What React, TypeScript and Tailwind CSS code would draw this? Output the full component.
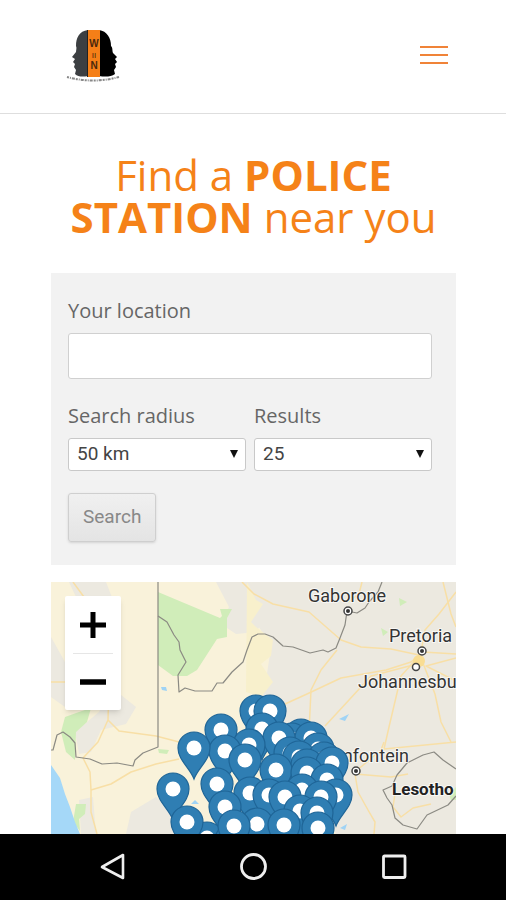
import React from 'react';

// Pin positions on the map, back to front
const pins = [
  [205, 129], [219, 129], [170, 148], [250, 153], [241, 157], [260, 156], [211, 147],
  [228, 156], [198, 163], [267, 167], [174, 169], [143, 166], [239, 171], [248, 175],
  [194, 178], [273, 176], [256, 183], [281, 181], [225, 188], [256, 191],
  [276, 198], [166, 202], [122, 207], [251, 208], [199, 211], [285, 213], [218, 213],
  [270, 215], [234, 215], [174, 225], [249, 229], [266, 231], [156, 256], [180, 258],
  [136, 240], [206, 242], [183, 244], [233, 243], [267, 246],
];

const roads = [
  'M22 0 L33 15 L45 30 L55 50 L58 100 L57 138 L47 160 L32 176 L39 190 L40 208 L40 230 L46 252',
  'M0 100 H22',
  'M57 138 L68 149 L105 154 L128 160 L145 172',
  'M40 208 L60 202 L80 190 L105 182 L128 177',
  'M191 0 L203 12 L222 22 L258 30 L274 44 L290 58 L310 65 L340 67 L368 73',
  'M234 122 L256 112 L290 96 L335 88 L360 80 L372 70 L405 72',
  'M286 68 L270 88 L260 108 L258 150',
  'M311 0 L308 12 L297 20',
  'M392 0 L400 32 L405 45',
  'M405 10 L388 32 L374 48 L370 70',
  'M370 72 L350 94 L338 145 L333 167 L405 160',
  'M366 82 L320 94 L298 118 L274 144',
  'M370 76 L384 112 L390 140 L400 160',
  'M405 76 L375 84 L405 99',
  'M304 192 L340 195 L357 192',
  'M304 192 L307 210 L317 228 L324 240 L323 252',
  'M304 190 L330 168 L333 160',
  'M345 205 L342 225 L350 235 L362 226 L380 222',
];

function Logo() {
  return (
    <svg viewBox="0 -4 54 58" className="h-[58px] w-[54px]" aria-label="WIN">
      <path
        d="M22 0 C13 1 10 8 10 16 C11 18 10 20 10 22 L6 27 L9 29 L7 32 L9 34 L8 37 L10 40 L9 44 C12 47 17 47 22 46 Z"
        fill="#3c3f42"
      />
      <path
        d="M33 0 C41 1 45 8 45 16 C47 18 46 20 47 23 L51 27 L49 29 L51 32 L49 34 L50 37 L48 40 L49 44 C45 47 39 47 33 46 Z"
        fill="#000"
      />
      <rect x="22" y="0" width="12" height="47" fill="#f57f17" />
      <path d="M21.5 0 V47" stroke="#222" strokeWidth="1" />
      <g
        fill="#4a280c"
        fontFamily="Liberation Sans, sans-serif"
        fontSize="10"
        fontWeight="700"
        textAnchor="middle"
      >
        <text x="28" y="17">W</text>
        <text x="28" y="28" fontSize="8" fontWeight="400">II</text>
        <text x="28" y="39">N</text>
      </g>
      <path
        d="M1 47 Q27 54 53 47"
        fill="none"
        stroke="#888"
        strokeWidth="2"
        strokeDasharray="2 1 1 1 3 1"
      />
    </svg>
  );
}

function City({ x, y, capital = false }: { x: number; y: number; capital?: boolean }) {
  return (
    <g>
      <circle cx={x} cy={y} r={capital ? 4 : 3.5} fill="#fff" stroke="#444" strokeWidth="1.5" />
      {capital && <circle cx={x} cy={y} r="2" fill="#333" />}
    </g>
  );
}

function StationMap() {
  return (
    <svg
      viewBox="0 0 405 252"
      preserveAspectRatio="xMidYMin slice"
      className="absolute inset-0 h-full w-full"
      aria-label="Map of police stations"
    >
      <rect width="405" height="252" fill="#f9f2da" />
      {/* terrain */}
      <g fill="#ece9e0">
        <path d="M18 0 L55 0 L62 18 L40 30 L25 15 Z" />
        <path d="M165 0 L200 0 L215 35 L205 50 L185 52 L170 42 L178 25 Z" />
        <path d="M200 0 H405 V252 H285 L240 150 L215 130 L205 118 L214 105 L220 65 L205 40 Z" />
        <path d="M0 55 L14 80 L14 125 L0 115 Z" />
        <path d="M60 105 L85 125 L75 142 L50 148 L40 170 L28 172 L24 150 L48 130 Z" />
        <path d="M28 218 L42 215 L45 252 L30 252 Z" />
        <path d="M80 230 L105 215 L128 235 L135 252 H75 Z" />
      </g>
      <path d="M196 0 L205 18 L212 22 L200 40 L205 45 L222 58 L220 74 L210 82 L222 100 L210 115 L195 110 Z" fill="#f8f0cc" />
      {/* parks */}
      <g fill="#d0edb9">
        <path d="M107 10 L169 36 L171 34 L169 27 H181 L176 36 V55 L166 57 L146 88 L136 94 H122 L107 83 Z" />
        <path d="M28 130 L40 126 L36 140 L25 150 L24 178 L15 170 L10 150 L14 135 Z" />
        <path d="M25 222 L35 222 L34 232 L28 237 L29 249 L22 240 Z" />
        <path d="M107 167 L118 168 L116 172 L108 171 Z" />
        <path d="M348 16 L356 20 L349 24 Z M330 46 L337 50 L332 54 Z" />
        <path d="M398 212 L405 205 V218 L400 218 Z" />
      </g>
      <path d="M0 183 L9 196 L14 212 L19 225 L24 240 L29 252 H0 Z" fill="#a5d8f8" />
      <path
        d="M110 105 L115 105 L116 109 L111 108 Z M140 222 L144 218 L148 222 Z M288 137 L298 132 L294 139 Z M289 246 L296 242 L294 248 Z"
        fill="#9fd3f5"
      />
      <g fill="none" stroke="#f8dfa6" strokeWidth="1.5" strokeLinejoin="round">
        {roads.map((d) => (
          <path key={d} d={d} />
        ))}
      </g>
      <circle cx="368" cy="79" r="6" fill="#f9dd92" />
      {/* borders */}
      <g fill="none" stroke="#8b8a83" strokeWidth="1.2" strokeLinejoin="round">
        <path d="M107 0 V165 L92 171 L84 178 L82 184 L66 181 L51 182 L39 177 L25 175 L24 161 L19 155 L12 150 L6 153 L2 168 L0 168" />
        <path d="M107 34 L116 40 L123 53 L128 60 L129 68 L135 80 L127 93 L128 110 L134 106 L144 109 L161 109 L166 101 H172 L181 90 L192 80 L196 68 L201 55 L207 52 H214 L222 55 L232 64 L242 65 L259 71 L272 68 L277 70 L285 66 L289 56 L294 43 L296 29 L306 31 L314 26 L318 20 L327 10 L331 0" />
        <path d="M405 214 L397 223 L376 233 L371 240 L366 247 L352 243 L344 236 L341 223 L336 216 L332 208 L341 204 L346 193 L356 181 L372 173 L383 170 L392 178 L405 187" />
      </g>
      <City x={297} y={29} capital />
      <City x={371} y={69} capital />
      <City x={365} y={85} />
      <City x={305} y={189} capital />
      <g
        fill="#333"
        stroke="#fff"
        strokeWidth="2"
        strokeOpacity="0.7"
        paintOrder="stroke"
        fontFamily="Roboto, sans-serif"
        fontSize="18"
      >
        <text x="257" y="20">Gaborone</text>
        <text x="338" y="60">Pretoria</text>
        <text x="307" y="106">Johannesburg</text>
        <text x="358" y="180" textAnchor="end">Bloemfontein</text>
        <text x="341" y="213" fontSize="17" fontWeight="700" fill="#222">Lesotho</text>
      </g>
      {pins.map(([x, y]) => (
        <g key={`${x}-${y}`} transform={`translate(${x} ${y})`}>
          <path
            d="M0 31 C-4 20 -16 12 -16 0 A16 16 0 0 1 16 0 C16 12 4 20 0 31 Z"
            fill="#2f7eb3"
            stroke="#1f6597"
            strokeWidth="1.2"
          />
          <circle r="7.5" fill="#fff" />
        </g>
      ))}
    </svg>
  );
}

interface SelectFieldProps {
  id: string;
  label: string;
  options: string[];
}

function SelectField({ id, label, options }: SelectFieldProps) {
  return (
    <div className="flex-1">
      <label htmlFor={id} className="block text-[20px] leading-7">
        {label}
      </label>
      <div className="relative mt-2">
        <select
          id={id}
          className="block h-[33px] w-full appearance-none rounded-[3px] border border-[#c9c9c9] bg-white px-2 font-[Roboto,sans-serif] text-[19px] text-[#444]"
        >
          {options.map((option) => (
            <option key={option}>{option}</option>
          ))}
        </select>
        <svg viewBox="0 0 8 8" className="pointer-events-none absolute top-3 right-2 h-2 w-2">
          <path d="M0 0 H8 L4 8 Z" fill="#111" />
        </svg>
      </div>
    </div>
  );
}

export default function App() {
  return (
    <div className="flex min-h-screen flex-col bg-white font-['Open_Sans',sans-serif] text-[#666]">
      <header className="flex h-[114px] items-center justify-between border-b border-[#dedede] pr-[58px] pb-[3px] pl-[66px]">
        <Logo />
        <button type="button" aria-label="Menu" className="flex w-7 flex-col gap-[6px]">
          <span className="h-[2px] w-full bg-[#f08338]" />
          <span className="h-[2px] w-full bg-[#f08338]" />
          <span className="h-[2px] w-full bg-[#f08338]" />
        </button>
      </header>

      <main className="flex flex-1 flex-col pr-[50px] pl-[51px]">
        <h1 className="mt-10 text-center text-[42px] leading-[42px] font-normal text-[#f58218]">
          Find a <strong className="font-bold">POLICE STATION</strong> near you
        </h1>

        <form className="mt-[35px] bg-[#f2f2f2] pt-6 pr-6 pb-[23px] pl-[17px]" onSubmit={(e) => e.preventDefault()}>
          <label htmlFor="location" className="block text-[20px] leading-7">
            Your location
          </label>
          <input
            id="location"
            type="text"
            className="mt-2 block h-[46px] w-full rounded-[3px] border border-[#d0d0d0] bg-white px-3 text-[19px]"
          />
          <div className="mt-[23px] flex gap-2">
            <SelectField id="radius" label="Search radius" options={['50 km', '100 km', '200 km']} />
            <SelectField id="results" label="Results" options={['25', '50', '75']} />
          </div>
          <button
            type="submit"
            className="mt-[22px] block h-[49px] rounded-[3px] border border-[#cfcfcf] bg-linear-to-b from-[#f0f0f0] to-[#e4e4e4] px-[14px] font-[Roboto,sans-serif] text-[19px] text-[#888] shadow-sm"
          >
            Search
          </button>
        </form>

        <section className="relative mt-[17px] min-h-[252px] flex-1 overflow-hidden">
          <StationMap />
          <div className="absolute top-[14px] left-[14px] flex w-14 flex-col rounded-[2px] bg-white shadow-md">
            <button type="button" aria-label="Zoom in" className="flex h-[57px] items-center justify-center">
              <svg viewBox="0 0 26 26" className="h-[26px] w-[26px]">
                <path d="M0 13 H26 M13 0 V26" stroke="#000" strokeWidth="5" />
              </svg>
            </button>
            <span className="mx-2 h-px bg-[#e6e6e6]" />
            <button type="button" aria-label="Zoom out" className="flex h-14 items-center justify-center">
              <svg viewBox="0 0 26 26" className="h-[26px] w-[26px]">
                <path d="M0 13 H26" stroke="#000" strokeWidth="5.5" />
              </svg>
            </button>
          </div>
        </section>
      </main>

      <nav className="flex h-[66px] items-center justify-around bg-black px-[42px]">
        <button type="button" aria-label="Back">
          <svg viewBox="0 0 28 28" className="h-7 w-7" fill="none" stroke="#eee" strokeWidth="2.6">
            <path d="M25 2 V25 L4 14 Z" strokeLinejoin="round" />
          </svg>
        </button>
        <button type="button" aria-label="Home">
          <svg viewBox="0 0 28 28" className="h-7 w-7" fill="none" stroke="#eee" strokeWidth="2.8">
            <circle cx="14.5" cy="13.5" r="12" />
          </svg>
        </button>
        <button type="button" aria-label="Recent apps">
          <svg viewBox="0 0 28 28" className="h-7 w-7" fill="none" stroke="#eee" strokeWidth="2.8">
            <rect x="3.5" y="3" width="21.5" height="21.5" rx="1" />
          </svg>
        </button>
      </nav>
    </div>
  );
}
